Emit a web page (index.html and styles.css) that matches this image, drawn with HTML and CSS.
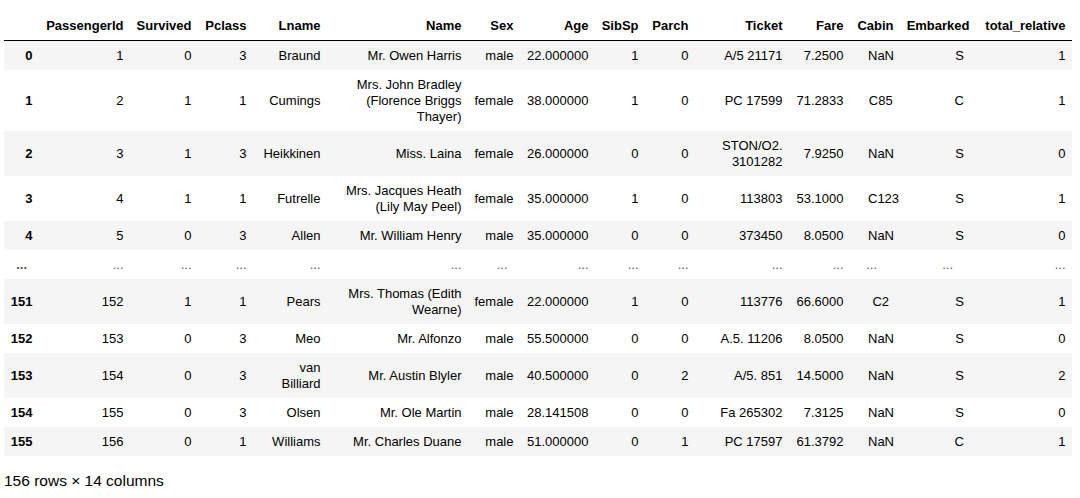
FILE: index.html
```html
<!DOCTYPE html>
<html>
<head>
<meta charset="utf-8">
<link rel="stylesheet" href="styles.css">
</head>
<body>
<div class="output">
<table class="dataframe">
<colgroup>
<col class="w-idx"><col class="w-pid"><col class="w-surv"><col class="w-pclass"><col class="w-lname"><col class="w-name"><col class="w-sex"><col class="w-age"><col class="w-sibsp"><col class="w-parch"><col class="w-ticket"><col class="w-fare"><col class="w-cabin"><col class="w-emb"><col class="w-total">
</colgroup>
<thead>
<tr><th></th><th>PassengerId</th><th>Survived</th><th>Pclass</th><th>Lname</th><th>Name</th><th>Sex</th><th>Age</th><th>SibSp</th><th>Parch</th><th>Ticket</th><th>Fare</th><th>Cabin</th><th>Embarked</th><th>total_relative</th></tr>
</thead>
<tbody>
<tr><th>0</th><td>1</td><td>0</td><td>3</td><td>Braund</td><td>Mr. Owen Harris</td><td>male</td><td>22.000000</td><td>1</td><td>0</td><td>A/5 21171</td><td>7.2500</td><td class="cabin">NaN</td><td class="emb">S</td><td>1</td></tr>
<tr><th>1</th><td>2</td><td>1</td><td>1</td><td>Cumings</td><td>Mrs. John Bradley (Florence Briggs Thayer)</td><td>female</td><td>38.000000</td><td>1</td><td>0</td><td>PC 17599</td><td>71.2833</td><td class="cabin">C85</td><td class="emb">C</td><td>1</td></tr>
<tr><th>2</th><td>3</td><td>1</td><td>3</td><td>Heikkinen</td><td>Miss. Laina</td><td>female</td><td>26.000000</td><td>0</td><td>0</td><td>STON/O2. 3101282</td><td>7.9250</td><td class="cabin">NaN</td><td class="emb">S</td><td>0</td></tr>
<tr><th>3</th><td>4</td><td>1</td><td>1</td><td>Futrelle</td><td>Mrs. Jacques Heath (Lily May Peel)</td><td>female</td><td>35.000000</td><td>1</td><td>0</td><td>113803</td><td>53.1000</td><td class="cabin">C123</td><td class="emb">S</td><td>1</td></tr>
<tr><th>4</th><td>5</td><td>0</td><td>3</td><td>Allen</td><td>Mr. William Henry</td><td>male</td><td>35.000000</td><td>0</td><td>0</td><td>373450</td><td>8.0500</td><td class="cabin">NaN</td><td class="emb">S</td><td>0</td></tr>
<tr class="dots-row"><th class="dots-idx">...</th><td>...</td><td>...</td><td>...</td><td>...</td><td>...</td><td class="dots-sex">...</td><td>...</td><td>...</td><td>...</td><td>...</td><td>...</td><td class="dots-cabin">...</td><td class="dots-emb">...</td><td>...</td></tr>
<tr><th>151</th><td>152</td><td>1</td><td>1</td><td>Pears</td><td>Mrs. Thomas (Edith Wearne)</td><td>female</td><td>22.000000</td><td>1</td><td>0</td><td>113776</td><td>66.6000</td><td class="cabin">C2</td><td class="emb">S</td><td>1</td></tr>
<tr><th>152</th><td>153</td><td>0</td><td>3</td><td>Meo</td><td>Mr. Alfonzo</td><td>male</td><td>55.500000</td><td>0</td><td>0</td><td>A.5. 11206</td><td>8.0500</td><td class="cabin">NaN</td><td class="emb">S</td><td>0</td></tr>
<tr><th>153</th><td>154</td><td>0</td><td>3</td><td>van Billiard</td><td>Mr. Austin Blyler</td><td>male</td><td>40.500000</td><td>0</td><td>2</td><td>A/5. 851</td><td>14.5000</td><td class="cabin">NaN</td><td class="emb">S</td><td>2</td></tr>
<tr><th>154</th><td>155</td><td>0</td><td>3</td><td>Olsen</td><td>Mr. Ole Martin</td><td>male</td><td>28.141508</td><td>0</td><td>0</td><td>Fa 265302</td><td>7.3125</td><td class="cabin">NaN</td><td class="emb">S</td><td>0</td></tr>
<tr><th>155</th><td>156</td><td>0</td><td>1</td><td>Williams</td><td>Mr. Charles Duane</td><td>male</td><td>51.000000</td><td>0</td><td>1</td><td>PC 17597</td><td>61.3792</td><td class="cabin">NaN</td><td class="emb">C</td><td>1</td></tr>
</tbody>
</table>
<p class="shape">156 rows × 14 columns</p>
</div>
</body>
</html>
```
FILE: styles.css
```css
html, body {
  margin: 0;
  padding: 0;
  background: #ffffff;
}

body {
  font-family: "Liberation Sans", Arial, Helvetica, sans-serif;
  color: #000000;
}

.output {
  padding: 11px 0 0 4px;
}

.dataframe {
  table-layout: fixed;
  border-collapse: collapse;
  border-spacing: 0;
  border: none;
  width: 1068px;
  font-size: 13px;
  line-height: 16px;
  color: #000000;
}

.w-idx { width: 35px; }
.w-pid { width: 91px; }
.w-surv { width: 68px; }
.w-pclass { width: 55px; }
.w-lname { width: 74px; }
.w-name { width: 141px; }
.w-sex { width: 52px; }
.w-age { width: 75px; }
.w-sibsp { width: 50px; }
.w-parch { width: 50px; }
.w-ticket { width: 94px; }
.w-fare { width: 61px; }
.w-cabin { width: 50px; }
.w-emb { width: 76px; }
.w-total { width: 96px; }

.dataframe th,
.dataframe td {
  padding: 6.5px 6.5px;
  text-align: right;
  vertical-align: middle;
  border: none;
}

.dataframe thead th {
  font-weight: bold;
  white-space: nowrap;
  border-bottom: 1px solid #000000;
}

.dataframe tbody th {
  font-weight: bold;
}

.dataframe tbody tr:nth-child(odd) {
  background: #f5f5f5;
}

.dataframe tr.dots-row td,
.dataframe tr.dots-row th {
  color: #555555;
}

.dataframe td.cabin {
  text-align: center;
  padding-left: 18px;
}

.dataframe td.emb {
  padding-right: 12px;
}

.dataframe th.dots-idx {
  padding-right: 12px;
}

.dataframe td.dots-sex {
  padding-right: 12.5px;
}

.dataframe td.dots-cabin {
  padding-right: 23px;
}

.dataframe td.dots-emb {
  padding-right: 23px;
}

.shape {
  margin: 16px 0 0 0;
  font-size: 15.5px;
  line-height: 18px;
}
```
